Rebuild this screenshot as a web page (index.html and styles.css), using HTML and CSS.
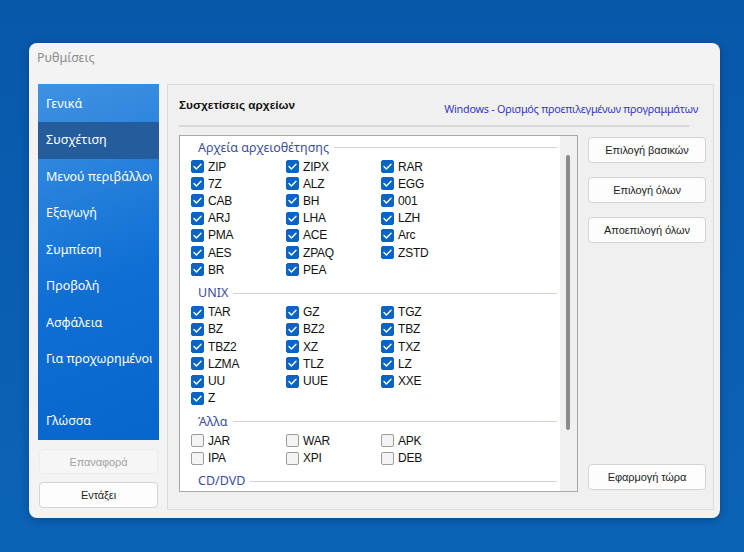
FILE: index.html
```html
<!DOCTYPE html>
<html lang="el">
<head>
<meta charset="utf-8">
<title>Ρυθμίσεις</title>
<link rel="stylesheet" href="styles.css">
</head>
<body>
<div class="desktop">
  <div class="window">
    <div class="titlebar">Ρυθμίσεις</div>
    <div class="body">
      <div class="side">
        <nav class="nav">
          <div class="nav-item"><span class="nav-text">Γενικά</span></div>
          <div class="nav-item active"><span class="nav-text">Συσχέτιση</span></div>
          <div class="nav-item"><span class="nav-text">Μενού περιβάλλοντος</span></div>
          <div class="nav-item"><span class="nav-text">Εξαγωγή</span></div>
          <div class="nav-item"><span class="nav-text">Συμπίεση</span></div>
          <div class="nav-item"><span class="nav-text">Προβολή</span></div>
          <div class="nav-item"><span class="nav-text">Ασφάλεια</span></div>
          <div class="nav-item"><span class="nav-text">Για προχωρημένους</span></div>
          <div class="nav-item last"><span class="nav-text">Γλώσσα</span></div>
        </nav>
        <button class="btn btn-disabled reset">Επαναφορά</button>
        <button class="btn ok">Εντάξει</button>
      </div>
      <div class="main">
        <div class="main-head">
          <div class="main-title">Συσχετίσεις αρχείων</div>
          <div class="main-link">Windows - Ορισμός προεπιλεγμένων προγραμμάτων</div>
        </div>
        <div class="rule"></div>
        <div class="content">
          <div class="listbox">
            <div class="list">
              <div class="group">
                <div class="group-head"><span class="group-title">Αρχεία αρχειοθέτησης</span><span class="group-line"></span></div>
                <div class="grid">
                  <label class="cb"><span class="box on"><svg viewBox="0 0 13 13"><polyline points="3,6.6 5.4,9 10,4.2"/></svg></span>ZIP</label>
                  <label class="cb"><span class="box on"><svg viewBox="0 0 13 13"><polyline points="3,6.6 5.4,9 10,4.2"/></svg></span>ZIPX</label>
                  <label class="cb"><span class="box on"><svg viewBox="0 0 13 13"><polyline points="3,6.6 5.4,9 10,4.2"/></svg></span>RAR</label>
                  <label class="cb"><span class="box on"><svg viewBox="0 0 13 13"><polyline points="3,6.6 5.4,9 10,4.2"/></svg></span>7Z</label>
                  <label class="cb"><span class="box on"><svg viewBox="0 0 13 13"><polyline points="3,6.6 5.4,9 10,4.2"/></svg></span>ALZ</label>
                  <label class="cb"><span class="box on"><svg viewBox="0 0 13 13"><polyline points="3,6.6 5.4,9 10,4.2"/></svg></span>EGG</label>
                  <label class="cb"><span class="box on"><svg viewBox="0 0 13 13"><polyline points="3,6.6 5.4,9 10,4.2"/></svg></span>CAB</label>
                  <label class="cb"><span class="box on"><svg viewBox="0 0 13 13"><polyline points="3,6.6 5.4,9 10,4.2"/></svg></span>BH</label>
                  <label class="cb"><span class="box on"><svg viewBox="0 0 13 13"><polyline points="3,6.6 5.4,9 10,4.2"/></svg></span>001</label>
                  <label class="cb"><span class="box on"><svg viewBox="0 0 13 13"><polyline points="3,6.6 5.4,9 10,4.2"/></svg></span>ARJ</label>
                  <label class="cb"><span class="box on"><svg viewBox="0 0 13 13"><polyline points="3,6.6 5.4,9 10,4.2"/></svg></span>LHA</label>
                  <label class="cb"><span class="box on"><svg viewBox="0 0 13 13"><polyline points="3,6.6 5.4,9 10,4.2"/></svg></span>LZH</label>
                  <label class="cb"><span class="box on"><svg viewBox="0 0 13 13"><polyline points="3,6.6 5.4,9 10,4.2"/></svg></span>PMA</label>
                  <label class="cb"><span class="box on"><svg viewBox="0 0 13 13"><polyline points="3,6.6 5.4,9 10,4.2"/></svg></span>ACE</label>
                  <label class="cb"><span class="box on"><svg viewBox="0 0 13 13"><polyline points="3,6.6 5.4,9 10,4.2"/></svg></span>Arc</label>
                  <label class="cb"><span class="box on"><svg viewBox="0 0 13 13"><polyline points="3,6.6 5.4,9 10,4.2"/></svg></span>AES</label>
                  <label class="cb"><span class="box on"><svg viewBox="0 0 13 13"><polyline points="3,6.6 5.4,9 10,4.2"/></svg></span>ZPAQ</label>
                  <label class="cb"><span class="box on"><svg viewBox="0 0 13 13"><polyline points="3,6.6 5.4,9 10,4.2"/></svg></span>ZSTD</label>
                  <label class="cb"><span class="box on"><svg viewBox="0 0 13 13"><polyline points="3,6.6 5.4,9 10,4.2"/></svg></span>BR</label>
                  <label class="cb"><span class="box on"><svg viewBox="0 0 13 13"><polyline points="3,6.6 5.4,9 10,4.2"/></svg></span>PEA</label>
                </div>
              </div>
              <div class="group">
                <div class="group-head"><span class="group-title">UNIX</span><span class="group-line"></span></div>
                <div class="grid">
                  <label class="cb"><span class="box on"><svg viewBox="0 0 13 13"><polyline points="3,6.6 5.4,9 10,4.2"/></svg></span>TAR</label>
                  <label class="cb"><span class="box on"><svg viewBox="0 0 13 13"><polyline points="3,6.6 5.4,9 10,4.2"/></svg></span>GZ</label>
                  <label class="cb"><span class="box on"><svg viewBox="0 0 13 13"><polyline points="3,6.6 5.4,9 10,4.2"/></svg></span>TGZ</label>
                  <label class="cb"><span class="box on"><svg viewBox="0 0 13 13"><polyline points="3,6.6 5.4,9 10,4.2"/></svg></span>BZ</label>
                  <label class="cb"><span class="box on"><svg viewBox="0 0 13 13"><polyline points="3,6.6 5.4,9 10,4.2"/></svg></span>BZ2</label>
                  <label class="cb"><span class="box on"><svg viewBox="0 0 13 13"><polyline points="3,6.6 5.4,9 10,4.2"/></svg></span>TBZ</label>
                  <label class="cb"><span class="box on"><svg viewBox="0 0 13 13"><polyline points="3,6.6 5.4,9 10,4.2"/></svg></span>TBZ2</label>
                  <label class="cb"><span class="box on"><svg viewBox="0 0 13 13"><polyline points="3,6.6 5.4,9 10,4.2"/></svg></span>XZ</label>
                  <label class="cb"><span class="box on"><svg viewBox="0 0 13 13"><polyline points="3,6.6 5.4,9 10,4.2"/></svg></span>TXZ</label>
                  <label class="cb"><span class="box on"><svg viewBox="0 0 13 13"><polyline points="3,6.6 5.4,9 10,4.2"/></svg></span>LZMA</label>
                  <label class="cb"><span class="box on"><svg viewBox="0 0 13 13"><polyline points="3,6.6 5.4,9 10,4.2"/></svg></span>TLZ</label>
                  <label class="cb"><span class="box on"><svg viewBox="0 0 13 13"><polyline points="3,6.6 5.4,9 10,4.2"/></svg></span>LZ</label>
                  <label class="cb"><span class="box on"><svg viewBox="0 0 13 13"><polyline points="3,6.6 5.4,9 10,4.2"/></svg></span>UU</label>
                  <label class="cb"><span class="box on"><svg viewBox="0 0 13 13"><polyline points="3,6.6 5.4,9 10,4.2"/></svg></span>UUE</label>
                  <label class="cb"><span class="box on"><svg viewBox="0 0 13 13"><polyline points="3,6.6 5.4,9 10,4.2"/></svg></span>XXE</label>
                  <label class="cb"><span class="box on"><svg viewBox="0 0 13 13"><polyline points="3,6.6 5.4,9 10,4.2"/></svg></span>Z</label>
                </div>
              </div>
              <div class="group">
                <div class="group-head"><span class="group-title">Άλλα</span><span class="group-line"></span></div>
                <div class="grid">
                  <label class="cb"><span class="box"></span>JAR</label>
                  <label class="cb"><span class="box"></span>WAR</label>
                  <label class="cb"><span class="box"></span>APK</label>
                  <label class="cb"><span class="box"></span>IPA</label>
                  <label class="cb"><span class="box"></span>XPI</label>
                  <label class="cb"><span class="box"></span>DEB</label>
                </div>
              </div>
              <div class="group">
                <div class="group-head"><span class="group-title">CD/DVD</span><span class="group-line"></span></div>
              </div>
            </div>
            <div class="scrollbar"><div class="thumb"></div></div>
          </div>
          <div class="actions">
            <button class="btn">Επιλογή βασικών</button>
            <button class="btn">Επιλογή όλων</button>
            <button class="btn">Αποεπιλογή όλων</button>
            <button class="btn apply">Εφαρμογή τώρα</button>
          </div>
        </div>
      </div>
    </div>
  </div>
</div>
</body>
</html>
```

FILE: styles.css
```css
* { box-sizing: border-box; }
html, body { margin: 0; padding: 0; }
body {
  width: 744px;
  height: 552px;
  overflow: hidden;
  background: linear-gradient(180deg, #0858aa 0%, #0a5fb3 60%, #0b63b8 100%);
  font-family: "Liberation Sans", Arial, sans-serif;
}
.desktop {
  padding: 43px 0 0 29px;
}
.window {
  width: 691px;
  height: 475px;
  background: #f3f3f3;
  border-radius: 8px;
  box-shadow: 0 2px 8px rgba(0, 0, 0, 0.25);
  display: flex;
  flex-direction: column;
}
.titlebar {
  height: 41px;
  padding: 7px 0 0 8px;
  line-height: 16px;
  font-family: "Noto Sans", "Open Sans", sans-serif;
  font-size: 12.5px;
  color: #8d8d8d;
}
.body {
  display: flex;
  padding-left: 9px;
}
.side {
  width: 121px;
  display: flex;
  flex-direction: column;
}
.nav {
  height: 356px;
  padding-top: 1.5px;
  background: linear-gradient(160deg, #3f92e2 0%, #2a83dc 25%, #0f6fd4 55%, #0766cc 100%);
  display: flex;
  flex-direction: column;
}
.nav-item {
  height: 36.5px;
  line-height: 36.5px;
  padding: 0 7px 0 8px;
  color: #ffffff;
  font-family: "Noto Sans", "Open Sans", sans-serif;
  font-size: 12.5px;
  white-space: nowrap;
}
.nav-text {
  display: block;
  overflow: hidden;
}
.nav-item.active {
  background: #245c9c;
}
.nav-item.last {
  margin-top: auto;
  margin-bottom: 0.5px;
}
.btn {
  display: block;
  width: 118px;
  height: 26px;
  padding: 0;
  background: #fdfdfd;
  border: 1px solid #d3d3d3;
  border-radius: 4px;
  font-family: "Liberation Sans", Arial, sans-serif;
  font-size: 11px;
  letter-spacing: -0.1px;
  color: #1e1e1e;
  text-align: center;
}
.side .btn {
  width: 119px;
  margin-left: 1px;
}
.reset {
  margin-top: 9px;
  height: 25px;
}
.ok {
  margin-top: 8px;
}
.btn-disabled {
  background: #f6f6f6;
  border-color: #ececec;
  color: #a3a3a3;
}
.main {
  width: 547px;
  height: 426px;
  margin-left: 8px;
  border: 1px solid #dcdcdc;
  background: #f0f0f0;
  padding-left: 11px;
}
.main-head {
  height: 40px;
  display: flex;
  justify-content: space-between;
  padding-right: 15px;
}
.main-title {
  margin-top: 12px;
  line-height: 16px;
  font-weight: bold;
  font-size: 11.8px;
  color: #111111;
}
.main-link {
  margin-top: 16px;
  line-height: 16px;
  font-family: "Noto Sans", "Open Sans", sans-serif;
  font-size: 10.8px;
  color: #3737c8;
  letter-spacing: -0.25px;
}
.rule {
  height: 2px;
  margin-right: 24px;
  background: #d8d8d8;
}
.content {
  display: flex;
  margin-top: 8px;
}
.listbox {
  width: 399px;
  height: 357px;
  border: 1px solid #a8a8a8;
  background: #ffffff;
  display: flex;
}
.list {
  flex: 1;
  padding: 0 3px 0 11px;
  overflow: hidden;
}
.group {
  margin-bottom: 3.4px;
}
.group-head {
  height: 22px;
  display: flex;
  align-items: center;
  padding-left: 7px;
}
.group-title {
  font-family: "Noto Sans", "Open Sans", sans-serif;
  font-size: 12.5px;
  color: #3d4d9c;
  white-space: nowrap;
}
.group-line {
  flex: 1;
  height: 1px;
  margin-left: 5px;
  margin-top: 1px;
  background: #cbd0ea;
}
.grid {
  display: grid;
  grid-template-columns: 95px 95px 95px;
}
.cb {
  height: 17.2px;
  display: flex;
  align-items: center;
  font-size: 12px;
  color: #111111;
  letter-spacing: -0.2px;
}
.box {
  width: 13px;
  height: 13px;
  margin-right: 4px;
  border-radius: 2px;
  border: 1px solid #9c9c9c;
  background: #f4f4f4;
  flex: none;
  display: flex;
}
.box.on {
  background: #0a64c6;
  border-color: #0a64c6;
}
.box svg {
  width: 13px;
  height: 13px;
  margin: -1px;
}
.box polyline {
  fill: none;
  stroke: #ffffff;
  stroke-width: 1.4;
  stroke-linecap: round;
  stroke-linejoin: round;
}
.scrollbar {
  width: 17px;
  background: #f0f0f0;
  padding: 19px 0 0 6px;
}
.thumb {
  width: 4px;
  height: 275px;
  border-radius: 2px;
  background: #8a8a8a;
}
.actions {
  margin-left: 10px;
  height: 357px;
  padding: 2px 0;
  display: flex;
  flex-direction: column;
  gap: 14px;
}
.actions .apply {
  margin-top: auto;
}
```
